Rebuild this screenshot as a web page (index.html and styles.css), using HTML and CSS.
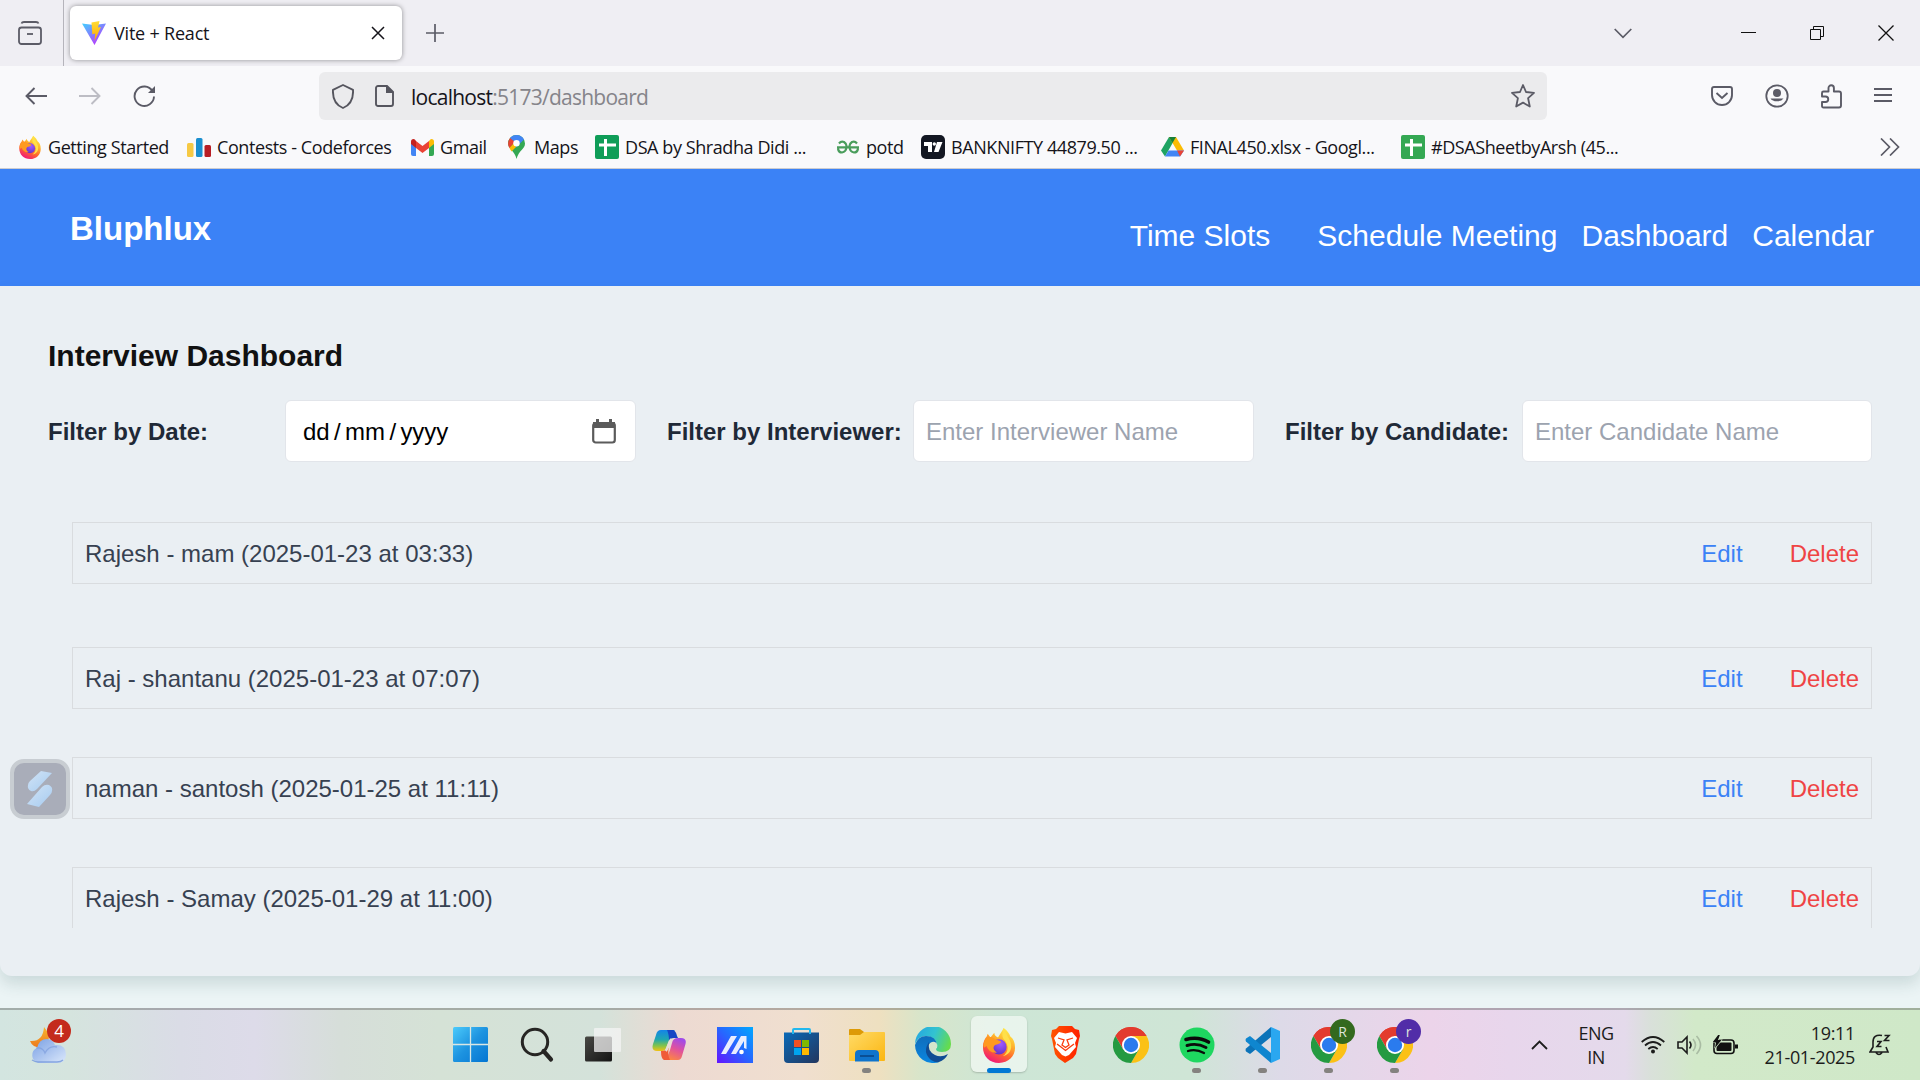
FILE: index.html
```html
<!DOCTYPE html>
<html lang="en">
<head>
<meta charset="utf-8">
<title>Vite + React</title>
<link rel="stylesheet" href="styles.css">
</head>
<body>
<svg class="defs" width="0" height="0" aria-hidden="true">
  <defs>
    <linearGradient id="gVite" x1="0" y1="0" x2=".7" y2="1"><stop offset="0" stop-color="#41d1ff"/><stop offset="1" stop-color="#bd34fe"/></linearGradient>
    <linearGradient id="gBolt" x1="0" y1="0" x2="0" y2="1"><stop offset="0" stop-color="#ffdd35"/><stop offset="1" stop-color="#ffa800"/></linearGradient>
    <linearGradient id="gFox" x1=".8" y1="0" x2=".3" y2="1"><stop offset="0" stop-color="#fff44f"/><stop offset=".35" stop-color="#ffb62d"/><stop offset=".65" stop-color="#ff6a2b"/><stop offset="1" stop-color="#f0157c"/></linearGradient>
    <radialGradient id="gGlobe" cx=".6" cy=".3" r=".8"><stop offset="0" stop-color="#a05bff"/><stop offset="1" stop-color="#5b2fc0"/></radialGradient>
    <linearGradient id="gWin" x1="0" y1="0" x2="1" y2="1"><stop offset="0" stop-color="#4ccbfb"/><stop offset=".5" stop-color="#1d93e0"/><stop offset="1" stop-color="#0475d2"/></linearGradient>
    <linearGradient id="gDark" x1="0" y1="0" x2="1" y2="1"><stop offset="0" stop-color="#484844"/><stop offset="1" stop-color="#141414"/></linearGradient>
    <linearGradient id="gCopA" x1="0" y1="0" x2="0" y2="1"><stop offset="0" stop-color="#1484e8"/><stop offset=".45" stop-color="#1fa7b0"/><stop offset=".75" stop-color="#83c34a"/><stop offset="1" stop-color="#f2c213"/></linearGradient>
    <linearGradient id="gCopB" x1=".6" y1="0" x2=".2" y2="1"><stop offset="0" stop-color="#a14be8"/><stop offset=".45" stop-color="#e0529d"/><stop offset="1" stop-color="#ff8a3c"/></linearGradient>
    <linearGradient id="gMa" x1="0" y1="1" x2="1" y2="0"><stop offset="0" stop-color="#6414ff"/><stop offset=".5" stop-color="#2766ff"/><stop offset="1" stop-color="#00a8ff"/></linearGradient>
    <linearGradient id="gStore" x1="0" y1="0" x2="1" y2="1"><stop offset="0" stop-color="#0a6ab8"/><stop offset="1" stop-color="#23365e"/></linearGradient>
    <linearGradient id="gFolder" x1="0" y1="0" x2="1" y2="1"><stop offset="0" stop-color="#ffdb67"/><stop offset="1" stop-color="#fbb612"/></linearGradient>
    <linearGradient id="gEdgeTop" x1="0" y1=".3" x2="1" y2=".6"><stop offset="0" stop-color="#25a8e0"/><stop offset=".5" stop-color="#33c3d0"/><stop offset="1" stop-color="#66dc4b"/></linearGradient>
    <linearGradient id="gEdgeLow" x1="0" y1="0" x2="0" y2="1"><stop offset="0" stop-color="#0f6dbb"/><stop offset="1" stop-color="#0a86e0"/></linearGradient>
    <linearGradient id="gBrave" x1="0" y1="0" x2="1" y2="0"><stop offset="0" stop-color="#ff5500"/><stop offset="1" stop-color="#ff2000"/></linearGradient>
    <linearGradient id="gCloud" x1="0" y1="0" x2="1" y2="1"><stop offset="0" stop-color="#7aa0e4"/><stop offset="1" stop-color="#dbe8fb"/></linearGradient>
    <linearGradient id="gMoon" x1="0" y1="0" x2="0" y2="1"><stop offset="0" stop-color="#f7b731"/><stop offset="1" stop-color="#ee7a1c"/></linearGradient>
    <linearGradient id="gGlass" x1="0" y1="0" x2="1" y2="1"><stop offset="0" stop-color="#d2e4f6"/><stop offset="1" stop-color="#a6cbf0"/></linearGradient>
    <symbol id="firefox" viewBox="0 0 36 38">
      <path d="M23 1c4 3 6 6 7 9 3 2 5 6 5 12 0 9-7 16-17 16S1 31 1 21c0-5 2-9 4-11l1-3 3 4 4-5c0 3 2 4 4 5 2-4 4-6 6-10z" fill="url(#gFox)"/>
      <path d="M29 13c4 8 2 16-7 18 7-5 6-12 2-17-3-3-3-7-1-13 2 5 4 8 6 12z" fill="#ffe04a"/>
      <circle cx="18" cy="21" r="8" fill="url(#gGlobe)"/>
      <path d="M3 14c2-3 5-4 8-3 3 2 6 3 9 4 0 3-4 3-6 4-3 2-2 6 2 8-6 1-10-3-11-7l-3 2c-1-3 0-5 1-8z" fill="#ff9a1f"/>
    </symbol>
    <symbol id="chrome" viewBox="0 0 36 36">
      <path d="M18 9h15.600A18 18 0 0 0 2.400 9l7.800 13.500z" fill="#e33b2e"/>
      <path d="M25.800 13.500 33.600 9A18 18 0 0 1 18 36l7.800-13.500z" fill="#fbc116"/>
      <path d="M18 9h15.600l-3 7H18z" fill="#fbc116"/>
      <path d="M2.400 9A18 18 0 0 1 33.600 9H18z" fill="#e33b2e"/>
      <path d="M25.800 22.500 18 36A18 18 0 0 1 2.400 9l7.800 13.500z" fill="#249a41"/>
      <circle cx="18" cy="18" r="9" fill="#fff"/><circle cx="18" cy="18" r="7.200" fill="#2a7bee"/>
    </symbol>
    <symbol id="sheet" viewBox="0 0 24 24"><rect width="24" height="24" rx="2"/><path d="M10.500 4v17M4 10h17" stroke="#fff" stroke-width="3"/></symbol>
  </defs>
</svg>

<div class="browser">
  <div class="tabbar">
    <div class="tab-view">
      <svg width="24" height="24" viewBox="0 0 24 24" fill="none" stroke="#5b5b66" stroke-width="1.800"><path d="M3.500 2.500Q4 1 6 1h12q2 0 2.500 1.500"/><rect x="1" y="6.500" width="22" height="16.500" rx="2.500"/><path d="M9 13h6"/></svg>
    </div>
    <div class="tab">
      <svg width="24" height="24" viewBox="0 0 24 24"><path d="M0 2.500 12 4l12-1.500L12.500 24z" fill="url(#gVite)"/><path d="M9.500 1.500 17.500 0 16 6.500l3-.5L12.500 20l.8-7.500-3 .8z" fill="url(#gBolt)"/></svg>
      <span class="tab-title">Vite + React</span>
      <svg class="tab-close" width="14" height="14" viewBox="0 0 14 14" fill="none" stroke="#15141a" stroke-width="1.500"><path d="m1 1 12 12M13 1 1 13"/></svg>
    </div>
    <svg class="tab-new" width="18" height="18" viewBox="0 0 18 18" stroke="#5b5b66" stroke-width="1.700"><path d="M9 0v18M0 9h18"/></svg>
    <div class="window-controls">
      <svg width="18" height="11" viewBox="0 0 18 11" fill="none" stroke="#5b5b66" stroke-width="1.700"><path d="m.7 1 8.300 8.300L17.300 1"/></svg>
      <svg width="15" height="2" viewBox="0 0 15 2"><path d="M0 .5h15" stroke="#111"/></svg>
      <svg width="14" height="14" viewBox="0 0 14 14" fill="none" stroke="#111"><path d="M.5 3.500h10v10H.5zM3.500 3.500v-3h10v10h-3"/></svg>
      <svg width="16" height="16" viewBox="0 0 16 16" stroke="#111" stroke-width="1.300"><path d="m.5.5 15 15M15.500.5l-15 15"/></svg>
    </div>
  </div>

  <div class="toolbar">
    <div class="nav-buttons">
      <svg width="22" height="18" viewBox="0 0 22 18" fill="none" stroke="#5b5b66" stroke-width="1.900"><path d="M22 9H1.500M9.500 1l-8 8 8 8"/></svg>
      <svg width="22" height="18" viewBox="0 0 22 18" fill="none" stroke="#bdbdc4" stroke-width="1.900"><path d="M0 9h20.500M12.500 1l8 8-8 8"/></svg>
      <svg width="23" height="22" viewBox="0 0 23 22" fill="none" stroke="#5b5b66" stroke-width="1.900"><path d="M19.500 6A9.700 9.700 0 1 0 21 11.500"/><path d="M22 1v7h-7z" fill="#5b5b66" stroke="none"/></svg>
    </div>
    <div class="urlbar">
      <svg width="22" height="25" viewBox="0 0 22 25" fill="none" stroke="#55555e" stroke-width="1.900" stroke-linejoin="round"><path d="M11 1 21 5.800C21.500 14 18 21 11 24 4 21 .5 14 1 5.800z"/></svg>
      <svg width="19" height="22" viewBox="0 0 19 22"><path d="M3 1h9l6 6v12a2 2 0 0 1-2 2H3a2 2 0 0 1-2-2V3a2 2 0 0 1 2-2z" fill="none" stroke="#55555e" stroke-width="1.900"/><path d="M11 0v8h8z" fill="#55555e"/></svg>
      <span class="url">localhost<span class="url-rest">:5173/dashboard</span></span>
      <svg class="star" width="24" height="24" viewBox="0 0 24 24" fill="none" stroke="#5b5b66" stroke-width="1.800" stroke-linejoin="round"><path d="m12 1 3 7 8 .9-5.900 5.300 1.700 8.300L12 18.600 5.200 22.500l1.700-8.300L1 8.900 9 8z"/></svg>
    </div>
    <div class="tools">
      <svg width="22" height="20" viewBox="0 0 22 20" fill="none" stroke="#5b5b66" stroke-width="1.900"><path d="M3 1h16q2 0 2 2v6a10 10 0 0 1-20 0V3q0-2 2-2z"/><path d="m5.500 7 5.500 5 5.500-5"/></svg>
      <svg width="24" height="24" viewBox="0 0 24 24"><circle cx="12" cy="12" r="10.700" fill="none" stroke="#5b5b66" stroke-width="1.800"/><circle cx="12" cy="9" r="4" fill="#5b5b66"/><path d="M5.500 14.500h13a7 4.500 0 0 1-13 0z" fill="#5b5b66"/></svg>
      <svg width="21" height="25" viewBox="0 0 21 25" fill="none" stroke="#5b5b66" stroke-width="1.900" stroke-linejoin="round"><path d="M2.500 7.500h5V4a2.700 2.700 0 0 1 5.400 0v3.500H18q2 0 2 2v12q0 2-2 2H2.500q-1.500 0-1.500-1.500v-4h3.500a2.700 2.700 0 0 0 0-5.500H1V9q0-1.500 1.500-1.500z"/></svg>
      <svg width="18" height="16" viewBox="0 0 18 16" stroke="#5b5b66" stroke-width="1.800"><path d="M0 1h18M0 7h18M0 13h18"/></svg>
    </div>
  </div>

  <div class="bookmarks">
    <div class="bm"><svg width="24" height="24"><use href="#firefox"/></svg><span>Getting Started</span></div>
    <div class="bm"><svg width="24" height="24" viewBox="0 0 24 24"><rect y="8" width="6.500" height="14" rx="1.500" fill="#f6c944"/><rect x="9" y="3" width="6.500" height="19" rx="1.500" fill="#1b8fcf"/><rect x="17.500" y="10" width="6.500" height="12" rx="1.500" fill="#b71d25"/></svg><span>Contests - Codeforces</span></div>
    <div class="bm"><svg width="23" height="18" viewBox="0 0 23 18"><path d="M0 5h5v13H2q-2 0-2-2z" fill="#4285f4"/><path d="M18 5h5v11q0 2-2 2h-3z" fill="#34a853"/><path d="M18 3q2-3 4-1.500 1 .7 1 2V6l-5 4z" fill="#fbbc04"/><path d="M5 3l6.500 5L18 3v7l-6.500 5L5 10z" fill="#ea4335"/><path d="M0 3.500Q0 1 2.500 1 4 1 5 3v7L0 6z" fill="#c5221f"/></svg><span>Gmail</span></div>
    <div class="bm bm-maps"><svg width="17" height="24" viewBox="0 0 17 24"><path d="M8.500 0a8.500 8.500 0 0 1 8.500 8.500C17 14 11 15 8.500 24 7 16 0 14 0 8.500A8.500 8.500 0 0 1 8.500 0z" fill="#34a853"/><path d="M8.500 0A8.500 8.500 0 0 1 16 4.500L8.500 12 2 3q2.500-3 6.500-3z" fill="#4285f4"/><path d="M2 3l5 4-5.500 6Q-1.500 8 2 3z" fill="#ea4335"/><path d="M8 12 3.500 16.500 1.500 13 6 8z" fill="#fbbc04"/><circle cx="8.500" cy="8.300" r="3.200" fill="#fff"/></svg><span>Maps</span></div>
    <div class="bm"><svg width="24" height="24" fill="#0f9d58"><use href="#sheet"/></svg><span>DSA by Shradha Didi ...</span></div>
    <div class="bm"><svg width="24" height="14" viewBox="0 0 24 14" fill="none" stroke="#4a9d5c" stroke-width="2.200"><path d="M3 3.500Q5 1 8 2q3 2 2.500 5-.5 5-4.500 5.500-3.500 0-4-4M1 7.300h22M21 3.500Q19 1 16 2q-3 2-2.500 5 .5 5 4.500 5.500 3.500 0 4-4"/></svg><span>potd</span></div>
    <div class="bm"><svg width="24" height="24" viewBox="0 0 24 24"><rect width="24" height="24" rx="5" fill="#131722"/><path d="M3 7h8v10H7v-6H3zM16 7h5.500l-4 10H13z" fill="#fff"/><circle cx="13.300" cy="9" r="1.700" fill="#fff"/></svg><span>BANKNIFTY 44879.50 ...</span></div>
    <div class="bm"><svg width="23" height="20" viewBox="0 0 23 20"><path d="M8 0h7L4 19.500 0 13.500z" fill="#1ea362"/><path d="M8 0h7l8 13.500h-7z" fill="#fbbc04"/><path d="M4 19.500 7.500 13.500H23l-4 6z" fill="#4285f4"/><path d="M16 13.500h7l-4 6z" fill="#ea4335"/><path d="M8 0h7l-3.500 6z" fill="#188038"/></svg><span>FINAL450.xlsx - Googl...</span></div>
    <div class="bm"><svg width="24" height="24" fill="#34a853"><use href="#sheet"/></svg><span>#DSASheetbyArsh (45...</span></div>
    <svg class="more" width="20" height="18" viewBox="0 0 20 18" fill="none" stroke="#5b5b66" stroke-width="1.700"><path d="m1 .5 8.500 8.500L1 17.500M10 .5 18.500 9 10 17.500"/></svg>
  </div>
</div>

<div class="page">
  <header class="site-header">
    <h1 class="brand">Bluphlux</h1>
    <nav class="links"><a class="first">Time Slots</a><a>Schedule Meeting</a><a>Dashboard</a><a>Calendar</a></nav>
  </header>
  <main class="panel">
    <h2 class="title">Interview Dashboard</h2>
    <div class="filters">
      <label class="f-date">Filter by Date:</label>
      <div class="field date"><span>dd<i>/</i>mm<i>/</i>yyyy</span>
        <svg width="24" height="25" viewBox="0 0 24 25"><rect x="1.200" y="4" width="21.600" height="19.500" rx="2.500" fill="none" stroke="#5b5b5b" stroke-width="2.200"/><path d="M1 3h22v6H1zM4 0h3v4H4zM17 0h3v4h-3z" fill="#5b5b5b"/></svg>
      </div>
      <label class="f-int">Filter by Interviewer:</label>
      <div class="field int">Enter Interviewer Name</div>
      <label class="f-can">Filter by Candidate:</label>
      <div class="field can">Enter Candidate Name</div>
    </div>
    <div class="list">
      <div class="row wide"><span>Rajesh - mam (2025-01-23 at 03:33)</span><a class="edit">Edit</a><a class="delete">Delete</a></div>
      <div class="row"><span>Raj - shantanu (2025-01-23 at 07:07)</span><a class="edit">Edit</a><a class="delete">Delete</a></div>
      <div class="row"><span>naman - santosh (2025-01-25 at 11:11)</span><a class="edit">Edit</a><a class="delete">Delete</a></div>
      <div class="row"><span>Rajesh - Samay (2025-01-29 at 11:00)</span><a class="edit">Edit</a><a class="delete">Delete</a></div>
    </div>
  </main>
  <div class="floating">
    <svg width="26" height="36" viewBox="0 0 26 36" fill="url(#gGlass)"><path d="M14 0 25 2 10 18q-3 3-6 2Q0 18 1 14q0-2 2-4z"/><path d="M12 36 0 33 15 16q3-3 7-2 4 2 3 6 0 2-2 4z"/></svg>
  </div>
</div>

<div class="taskbar">
  <div class="weather">
    <svg width="38" height="38" viewBox="0 0 38 38"><path d="M15 1q7 8 4 14-5 9-14 5-3-2-4-5 13 1 14-14z" fill="url(#gMoon)"/><path d="M9 37a8 8 0 0 1-1-15q2-9 10-9 6 0 8 6 11-1 11 9.500 0 8.500-9 8.500z" fill="url(#gCloud)"/><path d="M3 34q3 2 6 2h19q4 0 6-2" fill="none" stroke="#7698db" stroke-width="1.300" opacity=".8"/><path d="M7 22q7-1 9 5 4-8 12-6" fill="none" stroke="#7698db" stroke-width="1.300" opacity=".6"/></svg>
    <span class="count">4</span>
  </div>
  <div class="apps">
    <div class="app"><svg width="36" height="36" viewBox="0 0 36 36"><rect width="35" height="35" rx="1.500" fill="url(#gWin)"/><path d="M17.500 0v35M0 17.500h35" stroke="#d9e6e4" stroke-width="1.300"/></svg></div>
    <div class="app"><svg width="34" height="36" viewBox="0 0 34 36" fill="none" stroke="#262523"><circle cx="15" cy="15" r="12.700" stroke-width="3"/><path d="m23.500 24 7.500 8.500" stroke-width="4.200" stroke-linecap="round"/></svg></div>
    <div class="app"><svg width="36" height="36" viewBox="0 0 36 36"><rect y="9.500" width="27" height="25" rx="1.500" fill="url(#gDark)"/><rect x="9" y="1" width="27" height="24" rx="1" fill="#f4f4f4" opacity=".75"/></svg></div>
    <div class="app"><svg width="34" height="32" viewBox="0 0 34 32"><path d="M9 1h14q-4 3-6 10l-3 8q-1 3-4 3H5q-6 0-4-7l3-9Q5 1 9 1z" fill="url(#gCopA)"/><path d="M15 1h6q3 1 4 6l1 2h-4q-4 0-5 3 0-7-2-11z" fill="#1746c4"/><path d="M26 31H13q3-4 5-10l2-7q1-5 6-5h3q6 0 4.500 6L30 27q-1 4-4 4z" fill="url(#gCopB)"/><path d="M18 31h-6q-3-1-3-9 6 0 8-4-2 7 1 13z" fill="#f05a38"/><path d="m19 10-5 12q1-1 3-6l2-5z" fill="#e7ded6" stroke="#e7ded6" stroke-width="2"/></svg></div>
    <div class="app"><svg width="36" height="36" viewBox="0 0 36 36"><rect width="36" height="36" fill="url(#gMa)"/><path d="M4 27 14 9h6L9 27zM14 27 24 9h5.500v13l-2.500-1v-7L19 27z" fill="#e9edff"/><circle cx="24.500" cy="25" r="2.300" fill="#fff"/></svg></div>
    <div class="app"><svg width="35" height="36" viewBox="0 0 35 36"><path d="M0 5.500h35V32q0 4-4 4H4q-4 0-4-4z" fill="url(#gStore)"/><path d="M9 7V3q0-1 1-1h15q1 0 1 1v4" fill="none" stroke="#22b8ee" stroke-width="2"/><path fill="#f25022" d="M10 13h7v7h-7z"/><path fill="#7fba00" d="M18 13h7v7h-7z"/><path fill="#00a4ef" d="M10 21h7v7h-7z"/><path fill="#ffb900" d="M18 21h7v7h-7z"/></svg></div>
    <div class="app running"><svg width="36" height="36" viewBox="0 0 36 36"><path d="M0 3q0-1 1-1h10l4 3v5H0z" fill="#dd9a06"/><path d="M0 8h11l4-3h20q1 0 1 1v27q0 1-1 1H1q-1 0-1-1z" fill="url(#gFolder)"/><path d="M6 34.500V27q0-4 4-4h16q4 0 4 4v7.500z" fill="#0f74cc"/><path d="M11 29h14" stroke="#0a4f94" stroke-width="2"/></svg></div>
    <div class="app"><svg width="36" height="36" viewBox="0 0 36 36"><path d="M0 17A18 18 0 0 1 36 17q0 8-9 8-6 0-6-3 2-2 1-5Q19 8 9 9 3 10 0 17z" fill="url(#gEdgeTop)"/><path d="M0 18Q3 9 11 9q10 0 11 9-1-4-5-3-5 2-3 9 3 7 10 11A18 18 0 0 1 0 18z" fill="url(#gEdgeLow)"/><path d="M14 15q-7 10 2 18 5 3 8 2 6-2 9-8-7 4-13 1-8-4-6-13z" fill="#104c94"/></svg></div>
    <div class="app active"><svg width="34" height="36"><use href="#firefox"/></svg></div>
    <div class="app"><svg width="31" height="37" viewBox="0 0 31 37"><path d="m9 0h13l3 3 4 1 1 6-1 3-3 15-3 4-8 5-7-5-3-4L2 13 1 10l1-6 4-1z" fill="url(#gBrave)"/><path d="m9 6 6.500 1.500L22 6l5 6-2 5 1 4-7 8-3.500 1.500L12 29l-7-8 1-4-2-5z" fill="#fff"/><path d="m8 12 6 2-2 5 3.500 2.500L19 19l-2-5 6-2M7 18l4 3 4.500 3.500L20 21l4-3" fill="none" stroke="#fb3b0c" stroke-width="1.300"/></svg></div>
    <div class="app"><svg width="36" height="36"><use href="#chrome"/></svg></div>
    <div class="app running"><svg width="36" height="36" viewBox="0 0 36 36"><circle cx="18" cy="18" r="17.500" fill="#1ed760"/><path d="M7 12.500q12-3.500 22.500 2.500" fill="none" stroke="#0a0a0a" stroke-width="3.600" stroke-linecap="round"/><path d="M8 18.500q10-3 19 2" fill="none" stroke="#0a0a0a" stroke-width="2.900" stroke-linecap="round"/><path d="M9 24q8-2.500 16 2" fill="none" stroke="#0a0a0a" stroke-width="2.300" stroke-linecap="round"/></svg></div>
    <div class="app running"><svg width="36" height="36" viewBox="0 0 36 36"><path d="M26 0v10L5 27 1 24.500q-1-1.500 0-3z" fill="#0c73b8"/><path d="M26 36V26L5 9 1 11.500q-1 1.500 0 3z" fill="#0f86cf"/><path d="m26 0 9 4v28l-9 4z" fill="#2aa7f0"/></svg></div>
    <div class="app running"><svg width="36" height="36"><use href="#chrome"/></svg><span class="badge green">R</span></div>
    <div class="app running"><svg width="36" height="36"><use href="#chrome"/></svg><span class="badge violet">r</span></div>
  </div>
  <div class="tray">
    <svg width="17" height="10" viewBox="0 0 17 10" fill="none" stroke="#1c1c1c" stroke-width="1.800"><path d="m1 9 7.500-7.500L16 9"/></svg>
    <div class="lang">ENG<br>IN</div>
    <svg class="wifi" width="24" height="18" viewBox="0 0 24 18" fill="none" stroke="#1c1c1c" stroke-width="1.700"><path d="M.7 6q11.300-10 22.600 0M4 9.500q8-7 16 0M7.300 13q4.700-4 9.400 0"/><circle cx="12" cy="15.500" r="2" fill="#1c1c1c" stroke="none"/></svg>
    <svg class="sound" width="25" height="20" viewBox="0 0 25 20" fill="none" stroke="#1c1c1c" stroke-width="1.600"><path d="M1 7h4l5-5v16l-5-5H1zM12.500 6.500q3 3.500 0 7"/><path d="M16 4q5 6 0 12M19.500 1q8 9 0 18" stroke="#a9bca3"/></svg>
    <svg class="battery" width="25" height="20" viewBox="0 0 25 20"><rect x="1" y="5" width="20" height="13.500" rx="3" fill="none" stroke="#111" stroke-width="1.600"/><rect x="3.500" y="7.500" width="15" height="8.500" rx="1" fill="#111"/><path d="M22 9.500h3v4h-3z" fill="#111"/><path d="M5.500-.5-.5 7.500H3L2 13l6.500-8H5L7-.5z" fill="#111" stroke="#d2e9ca" stroke-width="1.200" paint-order="stroke"/></svg>
    <div class="clock">19:11<br>21-01-2025</div>
    <svg class="bell" width="22" height="22" viewBox="0 0 22 22" fill="none" stroke="#1c1c1c" stroke-width="1.600"><path d="M13 1.500Q4 0 4 8v5l-3 5h18l-2-5M7 18.500q3 4 6 0"/><path d="M8 7.500h4l-4 5h4.500M15.500 1.500H20l-4.500 5h5"/></svg>
  </div>
</div>
</body>
</html>
```
FILE: styles.css
```css
* { box-sizing: border-box; }
body {
  margin: 0;
  width: 1920px;
  height: 1080px;
  overflow: hidden;
  display: flex;
  flex-direction: column;
  font-family: "Liberation Sans", Arial, sans-serif;
}
svg { display: block; flex: none; }
.defs { position: absolute; }
h1, h2 { margin: 0; }

/* Browser window */
.browser {
  height: 169px;
  background: #f9f9fb;
  border-bottom: 1px solid #ccccd0;
  font-family: "Open Sans", "Noto Sans", sans-serif;
  color: #15141a;
}
.tabbar { height: 66px; background: #efeef3; display: flex; align-items: center; }
.tab-view { width: 64px; height: 66px; padding: 21px 0 0 18px; border-right: 1px solid #b5b4bb; }
.tab {
  display: flex;
  align-items: center;
  width: 332px;
  height: 54px;
  margin-left: 6px;
  padding: 0 17px 0 12px;
  border-radius: 6px;
  background: #fff;
  box-shadow: 0 0 5px rgba(0, 0, 0, .4);
}
.tab-title { margin-left: 8px; font-size: 18px; letter-spacing: -.2px; }
.tab-close { margin-left: auto; }
.tab-new { margin-left: 24px; }
.window-controls {
  margin-left: auto;
  display: grid;
  grid-template-columns: 127px 69px 68px 42px;
  align-items: center;
}
.toolbar { height: 60px; display: flex; align-items: center; }
.nav-buttons { width: 319px; padding-left: 25px; display: flex; gap: 32px; align-items: center; }
.urlbar {
  width: 1228px;
  height: 48px;
  padding: 0 12px 0 13px;
  border-radius: 6px;
  background: #ebebed;
  display: flex;
  align-items: center;
  gap: 21px;
}
.url { margin-left: -4px; padding-top: 1px; font-size: 21px; letter-spacing: -.75px; }
.url-rest { color: #85848a; }
.star { margin-left: auto; }
.tools { flex: 1; padding-left: 164px; display: flex; align-items: center; gap: 32px; }
.bookmarks {
  height: 42px;
  padding-left: 18px;
  display: grid;
  grid-template-columns: 169px 224px 94px 90px 241px 85px 240px 240px 479px 40px;
  align-items: center;
  font-size: 18px;
}
.bm { display: flex; align-items: center; gap: 6px; white-space: nowrap; letter-spacing: -.42px; }
.bm-maps { padding-left: 3px; gap: 9px; }

/* Web page */
.page { position: relative; height: 839px; background: #ebf4f5; }
.site-header {
  height: 117px;
  padding: 3px 46px 0 70px;
  display: flex;
  align-items: center;
  justify-content: space-between;
  background: #3b82f6;
  color: #fff;
}
.brand { font-size: 33px; line-height: 40px; }
.links { display: flex; gap: 24px; padding-top: 14px; font-size: 30px; line-height: 36px; }
.first { margin-right: 23px; }
.panel {
  height: 690px;
  padding: 52px 48px 0;
  border-radius: 0 0 12px 12px;
  background: #eaeff3;
  box-shadow: 0 8px 15px rgba(40, 80, 80, .16);
}
.title { font-size: 30px; line-height: 36px; color: #111; }
.filters { display: flex; align-items: center; margin-top: 26px; height: 62px; font-size: 24px; }
.filters label { padding-top: 2px; font-weight: 700; color: #1f2937; white-space: nowrap; }
.filters .f-date { width: 237px; }
.filters .f-int { width: 277px; padding-left: 31px; }
.filters .f-can { width: 268px; padding-left: 31px; }
.field {
  height: 62px;
  display: flex;
  align-items: center;
  justify-content: space-between;
  border: 1px solid #e2e5ea;
  border-radius: 6px;
  background: #fff;
  color: #9ca3af;
  padding: 2px 12px 0;
}
.date { width: 351px; padding: 0 19px 0 17px; color: #000; }
.date span { padding-top: 2px; letter-spacing: -.1px; }
.date i { font-style: normal; margin: 0 4.500px; }
.int { width: 341px; }
.can { width: 350px; }
.list { height: 466px; padding: 60px 0 0 24px; overflow: hidden; }
.row {
  height: 62px;
  padding: 2px 12px 0;
  margin-bottom: 48px;
  border: 1px solid #d9dcdf;
  display: flex;
  align-items: center;
  font-size: 24px;
  color: #374151;
}
.row.wide { margin-bottom: 63px; }
.row span { flex: 1; }
.row .edit { color: #3b82f6; margin-right: 47px; }
.row .delete { color: #ef4444; }
.floating {
  position: absolute;
  left: 10px;
  top: 590px;
  width: 60px;
  height: 60px;
  display: grid;
  place-items: center;
  border: 4px solid #c8cdd2;
  border-radius: 14px;
  background: #a9adb9;
}

/* Desktop taskbar */
.taskbar {
  height: 72px;
  border-top: 2px solid rgba(90, 90, 90, .4);
  display: flex;
  background: linear-gradient(90deg, #d3e5e0 0, #d5e4de 70px, #dadce6 180px, #dddbe9 255px, #d6ded9 340px, #d5e2d6 440px, #d4e2da 600px, #eddad2 680px, #f0dfcf 800px, #eee0c0 880px, #d8e5ca 920px, #cde6d6 1000px, #cfe5d6 1190px, #dddae8 1280px, #ecd4ea 1430px, #e8d6ec 1510px, #e4daeb 1625px, #d9e0da 1650px, #d2e9c9 1695px, #cfe8c8 1920px);
  color: #1c1c1c;
  font-family: "Open Sans", "Noto Sans", sans-serif;
}
.weather { position: relative; width: 438px; padding: 16px 0 0 29px; }
.count {
  position: absolute;
  left: 47px;
  top: 9px;
  width: 24px;
  height: 24px;
  border-radius: 50%;
  background: #c42b1c;
  color: #fff;
  font-size: 17px;
  line-height: 24px;
  text-align: center;
}
.apps { display: flex; }
.app { position: relative; width: 66px; height: 69px; display: flex; align-items: center; justify-content: center; }
.app svg { position: relative; }
.running::after, .active::after {
  content: "";
  position: absolute;
  left: 28px;
  top: 58px;
  width: 9px;
  height: 5px;
  border-radius: 3px;
  background: #84827f;
}
.active::before {
  content: "";
  position: absolute;
  left: 5px;
  top: 6px;
  width: 56px;
  height: 56px;
  border-radius: 6px;
  background: rgba(255, 255, 255, .55);
  box-shadow: 0 1px 2px rgba(0, 0, 0, .2);
}
.active::after { left: 21px; width: 24px; background: #0078d4; }
.badge {
  position: absolute;
  left: 34px;
  top: 9px;
  width: 25px;
  height: 25px;
  border-radius: 50%;
  color: #dfe5dc;
  font-size: 14px;
  line-height: 25px;
  text-align: center;
}
.green { background: #33691e; }
.violet { background: #512da8; }
.tray { margin-left: 103px; display: flex; align-items: center; font-size: 18px; line-height: 24px; padding-bottom: 1px; }
.lang { width: 66px; margin-left: 15px; text-align: center; letter-spacing: -.5px; }
.wifi { margin-left: 12px; }
.sound { margin-left: 12px; }
.battery { margin-left: 11px; }
.clock { width: 117px; text-align: right; letter-spacing: -.35px; }
.bell { margin-left: 14px; }
```
